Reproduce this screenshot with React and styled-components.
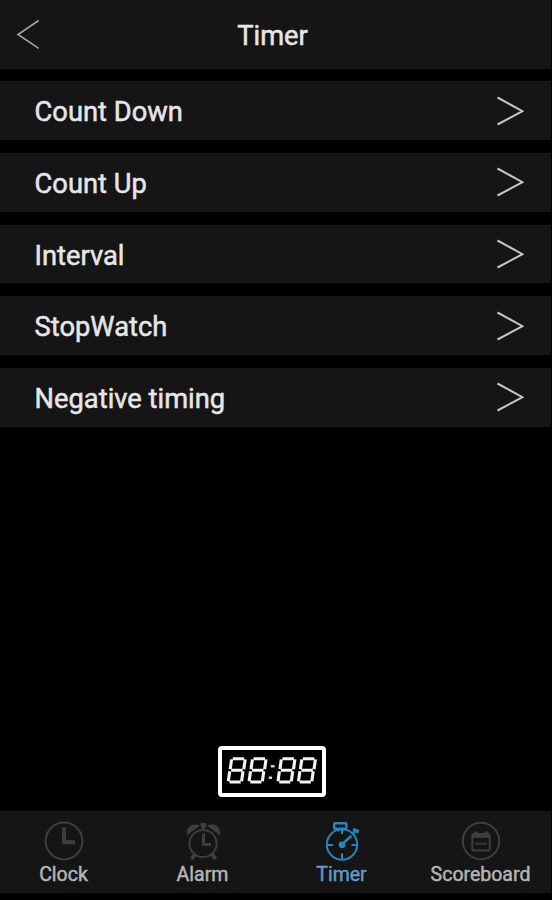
import React from 'react';
import styled, { createGlobalStyle } from 'styled-components';

const GlobalStyle = createGlobalStyle`
  * { box-sizing: border-box; }
  body {
    margin: 0;
    background: #000;
    font-family: Roboto, "Liberation Sans", sans-serif;
  }
`;

const Screen = styled.div`
  display: flex;
  flex-direction: column;
  width: 552px;
  height: 900px;
  padding: 0 1px 7px 0;
  background: #000;
  overflow: hidden;
`;

const Header = styled.header`
  display: grid;
  grid-template-columns: 60px 1fr 66px;
  align-items: center;
  flex: none;
  height: 68.5px;
  background: #151515;
`;

const BackButton = styled.button`
  display: flex;
  width: 60px;
  height: 68px;
  padding: 0;
  border: 0;
  background: none;
`;

const Title = styled.h1`
  margin: 3px 0 0;
  text-align: center;
  color: #e6e6e6;
  font-size: 27.3px;
  line-height: 32px;
  font-weight: 400;
  -webkit-text-stroke: 0.5px #e6e6e6;
`;

const Menu = styled.nav`
  display: flex;
  flex-direction: column;
  gap: 13px;
  margin-top: 12.8px;
`;

const MenuRow = styled.button`
  display: flex;
  align-items: center;
  justify-content: space-between;
  height: 58.7px;
  padding: 0 27px 0 34.6px;
  border: 0;
  background: #151515;
  color: #e6e6e6;
  font-family: inherit;
  font-size: 27.3px;
  line-height: 32px;
  -webkit-text-stroke: 0.5px #e6e6e6;
`;

const RowLabel = styled.span`
  padding-top: 3px;
`;

const DisplayArea = styled.div`
  display: flex;
  flex: 1;
  align-items: flex-end;
  justify-content: center;
  padding: 0 7px 14px 0;
`;

const DisplayFrame = styled.div`
  width: 108px;
  height: 51px;
  border: 4px solid #fff;
  border-radius: 4px;
`;

const TabBar = styled.nav`
  display: grid;
  grid-template-columns: repeat(4, 139px);
  justify-content: center;
  flex: none;
  height: 82px;
  padding-right: 7px;
  background: #151515;
`;

const Tab = styled.button`
  display: flex;
  flex-direction: column;
  align-items: center;
  padding: 10px 0 0;
  border: 0;
  background: none;
  color: ${(p) => (p.$active ? '#6299c8' : '#b4b4b4')};
  font-family: inherit;
  font-size: 19.5px;
  line-height: 24px;
  -webkit-text-stroke: 0.5px currentColor;
`;

const TabIcon = styled.svg`
  flex: none;
  display: block;
  width: 40px;
  height: 40px;
  margin-bottom: 2px;
  overflow: visible;
  fill: none;
  stroke: ${(p) => (p.$active ? '#2785bb' : '#3a3f41')};
  color: ${(p) => (p.$active ? '#2785bb' : '#3a3f41')};
  stroke-width: 2;
`;

const Chevron = () => (
  <svg width="27" height="30" viewBox="0 0 27 30" fill="none" stroke="#c6c6c6" strokeWidth="2">
    <path d="M.5 1.5 25.5 15.2.5 28.5" />
  </svg>
);

const DIGITS = [0, 20.8, 49.7, 70.2];

const Segments = ({ x }) => (
  <g transform={`translate(${x} 0)`}>
    <path d="M8.5 12.7H20M7 24.2H18.5M5.3 36H16.5" />
    <path d="M7.4 13.4 6 23.2M21 13.4 19.6 23.2M5.5 25.2 4.1 35.2M18.8 25.2 17.4 35.2" />
  </g>
);

const DigitalDisplay = () => (
  <DisplayFrame role="img" aria-label="88:88">
    <svg width="100" height="43" viewBox="4 4 100 43" display="block" fill="none" stroke="#f4f4f4" strokeWidth="3.1">
      <g transform="translate(6.2 0)">
        {DIGITS.map((x) => <Segments key={x} x={x} />)}
        <path d="M46.6 20.3H50.4M44.5 31.8H47.8" strokeWidth="2.6" stroke="#d0d0d0" />
      </g>
    </svg>
  </DisplayFrame>
);

const ClockIcon = () => (
  <TabIcon viewBox="0 0 40 40">
    <circle cx="20" cy="20" r="18.4" />
    <path d="M20 6.5V21.3H31" strokeWidth="4" />
  </TabIcon>
);

const AlarmIcon = () => (
  <TabIcon viewBox="0 0 40 40">
    <circle cx="20" cy="22.5" r="13.6" />
    <path d="M20.5 12.5V23.5H28" strokeWidth="3.2" />
    <path d="M4 14.5C2.5 6.5 9 .8 17 4.6Z M37 14.5C38.5 6.5 32 .8 24 4.6Z" fill="currentColor" stroke="none" />
    <path d="M17.5 2.5Q20.5 .8 23.5 2.5V4.5L22 8H19L17.5 4.5Z" fill="currentColor" stroke="none" />
    <path d="M11.5 34 9.3 36.8M29.5 34 31.7 36.8" strokeWidth="4" strokeLinecap="round" />
  </TabIcon>
);

const StopwatchIcon = () => (
  <TabIcon viewBox="0 0 40 40" $active>
    <circle cx="20" cy="23.5" r="15.2" />
    <rect x="12.2" y="2.2" width="12.2" height="5.6" rx="1" strokeWidth="2.5" />
    <path d="M16.5 8V10.5M20.5 8V10.5" />
    <path d="M31.2 12.3 34.3 9.2" strokeWidth="2" />
    <path d="M31 8.5 36.8 10.8" strokeWidth="3.5" />
    <path d="M20 32.2V38M5 24H11M29.5 24H35M20 9V13" />
    <circle cx="20" cy="23.8" r="2.4" fill="currentColor" />
    <path d="M21.5 22 29.5 14.8" strokeWidth="2.6" />
  </TabIcon>
);

const ScoreboardIcon = () => (
  <TabIcon viewBox="0 0 40 40">
    <circle cx="20" cy="20" r="18.2" />
    <rect x="11.3" y="13" width="17.4" height="16.6" rx="1" />
    <path d="M11 15H29" strokeWidth="4" />
    <path d="M15 12.2V15M25 12.2V15" strokeWidth="4" strokeLinecap="round" />
    <path d="M14 22.8H26" strokeWidth="2.5" opacity=".75" />
  </TabIcon>
);

const MODES = ['Count Down', 'Count Up', 'Interval', 'StopWatch', 'Negative timing'];

export default function App() {
  return (
    <>
      <GlobalStyle />
      <Screen>
        <Header>
          <BackButton aria-label="Back">
            <svg width="60" height="68" fill="none" stroke="#a4a4a4" strokeWidth="1.6">
              <path d="M38.7 20.5 18 34.5 38.7 48.3" />
            </svg>
          </BackButton>
          <Title>Timer</Title>
        </Header>
        <Menu>
          {MODES.map((mode) => (
            <MenuRow key={mode}>
              <RowLabel>{mode}</RowLabel>
              <Chevron />
            </MenuRow>
          ))}
        </Menu>
        <DisplayArea>
          <DigitalDisplay />
        </DisplayArea>
        <TabBar>
          <Tab><ClockIcon />Clock</Tab>
          <Tab><AlarmIcon />Alarm</Tab>
          <Tab $active><StopwatchIcon />Timer</Tab>
          <Tab><ScoreboardIcon />Scoreboard</Tab>
        </TabBar>
      </Screen>
    </>
  );
}
